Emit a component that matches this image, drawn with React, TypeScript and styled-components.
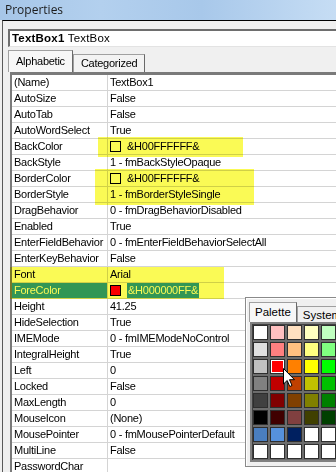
import styled, { createGlobalStyle } from "styled-components";

const GlobalStyle = createGlobalStyle`
  html, body {
    margin: 0;
    padding: 0;
    background: #f0f0f0;
  }
  body {
    font-family: "Liberation Sans", Arial, sans-serif;
    font-size: 11px;
    letter-spacing: -0.25px;
    color: #000;
  }
`;

const Screen = styled.div`
  position: relative;
  width: 336px;
  height: 472px;
  overflow: hidden;
  background: #f0f0f0;
`;

const TitleBar = styled.div`
  height: 20px;
  padding-left: 5px;
  background: linear-gradient(
    to right,
    #a6c6e8 0%,
    #b3d0ee 30%,
    #a8c8ea 60%,
    #c6ddf4 100%
  );
  font-family: "Open Sans", "Noto Sans", sans-serif;
  font-size: 12px;
  letter-spacing: 0;
  line-height: 20px;
  color: #1c1c1c;
`;

const Frame = styled.div`
  margin-left: 2px;
  height: 451px;
  padding: 8px 0 0 5px;
  border-top: 1px solid #000;
  border-left: 1px solid #5a5a5a;
`;

const ObjectBox = styled.div`
  width: 400px;
  height: 15px;
  padding-left: 2px;
  border-top: 2px solid #6e6e6e;
  border-left: 2px solid #6e6e6e;
  border-bottom: 1px solid #e3e3e3;
  background: #fff;
  font-size: 11.5px;
  letter-spacing: 0.2px;
  line-height: 15px;
  white-space: nowrap;

  b {
    font-weight: bold;
  }
`;

const TabStrip = styled.div`
  display: flex;
  align-items: flex-end;
  height: 22px;
  margin-top: 3px;
`;

const Tab = styled.div<{ $active?: boolean }>`
  height: ${(p) => (p.$active ? 21 : 17)}px;
  padding: 0 7px;
  border: 1px solid #a0a0a0;
  border-bottom: none;
  border-right: 1px solid #696969;
  background: ${(p) => (p.$active ? "#f7f7f7" : "#f3f3f3")};
  line-height: ${(p) => (p.$active ? 20 : 17)}px;
  white-space: nowrap;
`;

const Grid = styled.div`
  width: 400px;
  margin-left: 2px;
  border-top: 3px solid #7a7a7a;
  border-left: 2px solid #7a7a7a;
  background: #fff;
  height: 400px;
`;

const Row = styled.div`
  display: grid;
  grid-template-columns: 96px 1fr;
  height: 16px;
  box-sizing: border-box;
  border-bottom: 1px solid #d4d4d4;
  line-height: 15px;
  white-space: nowrap;
`;

const NameCell = styled.div<{ $selected?: boolean }>`
  padding-left: 2px;
  overflow: hidden;
  border-right: 1px solid #d4d4d4;
  background: ${(p) => (p.$selected ? "#3399ff" : "transparent")};
  color: ${(p) => (p.$selected ? "#fff" : "#000")};
`;

const ValueCell = styled.div`
  display: flex;
  align-items: center;
  padding-left: 2px;
`;

const Swatch = styled.span<{ $color: string }>`
  width: 9px;
  height: 9px;
  margin-right: 6px;
  border: 1px solid #000;
  background: ${(p) => p.$color};
`;

const Picked = styled.span`
  padding: 0 1px;
  background: #3399ff;
  color: #fff;
`;

const Marker = styled.div`
  position: absolute;
  background: #fafa55;
  mix-blend-mode: multiply;
  pointer-events: none;
`;

const Popup = styled.div`
  position: absolute;
  left: 245px;
  top: 297px;
  width: 110px;
  height: 164px;
  padding: 4px 0 0 4px;
  border: 1px solid #8a8a8a;
  box-shadow: inset 1px 1px 0 #fff;
  background: #f0f0f0;
`;

const PopupTabs = styled.div`
  display: flex;
  align-items: flex-end;
  height: 20px;
  margin-left: -1px;
`;

const PopupTab = styled.div<{ $active?: boolean }>`
  height: ${(p) => (p.$active ? 19 : 15)}px;
  padding: 0 5px;
  border: 1px solid #a0a0a0;
  border-bottom: none;
  border-right-color: #696969;
  background: ${(p) => (p.$active ? "#f7f7f7" : "#f0f0f0")};
  font-size: 11.5px;
  letter-spacing: 0;
  line-height: ${(p) => (p.$active ? 18 : 16)}px;
  white-space: nowrap;
`;

const SwatchGrid = styled.div`
  display: grid;
  grid-template-columns: repeat(6, 15px);
  grid-auto-rows: 15px;
  gap: 2px;
  padding: 1px;
  border: 2px solid #808080;
  border-right: none;
  box-shadow: inset 1px 1px 0 #404040;
  background: #6c6c6c;
  width: 120px;
`;

const Cell = styled.div<{ $color: string; $picked?: boolean }>`
  box-sizing: border-box;
  border: 1px solid #2e2e2e;
  background: ${(p) => p.$color};
  box-shadow: ${(p) => (p.$picked ? "inset 0 0 0 1px #fff" : "none")};
`;

const Pointer = styled.svg`
  position: absolute;
  left: 283px;
  top: 368px;
`;

type Prop = {
  name: string;
  value: string;
  swatch?: string;
  selected?: boolean;
};

const props: Prop[] = [
  { name: "(Name)", value: "TextBox1" },
  { name: "AutoSize", value: "False" },
  { name: "AutoTab", value: "False" },
  { name: "AutoWordSelect", value: "True" },
  { name: "BackColor", value: "&H00FFFFFF&", swatch: "#fff" },
  { name: "BackStyle", value: "1 - fmBackStyleOpaque" },
  { name: "BorderColor", value: "&H00FFFFFF&", swatch: "#fff" },
  { name: "BorderStyle", value: "1 - fmBorderStyleSingle" },
  { name: "DragBehavior", value: "0 - fmDragBehaviorDisabled" },
  { name: "Enabled", value: "True" },
  { name: "EnterFieldBehavior", value: "0 - fmEnterFieldBehaviorSelectAll" },
  { name: "EnterKeyBehavior", value: "False" },
  { name: "Font", value: "Arial" },
  { name: "ForeColor", value: "&H000000FF&", swatch: "#ff0000", selected: true },
  { name: "Height", value: "41.25" },
  { name: "HideSelection", value: "True" },
  { name: "IMEMode", value: "0 - fmIMEModeNoControl" },
  { name: "IntegralHeight", value: "True" },
  { name: "Left", value: "0" },
  { name: "Locked", value: "False" },
  { name: "MaxLength", value: "0" },
  { name: "MouseIcon", value: "(None)" },
  { name: "MousePointer", value: "0 - fmMousePointerDefault" },
  { name: "MultiLine", value: "False" },
  { name: "PasswordChar", value: "" },
];

const W = "#ffffff";
const palette: string[][] = [
  [W, "#ffc0c0", "#ffe0c0", "#ffffc0", "#c0ffc0", "#c0ffff"],
  ["#e0e0e0", "#ff8080", "#ffc080", "#ffff80", "#80ff80", "#80ffff"],
  ["#c0c0c0", "#ff0000", "#ff8000", "#ffff00", "#00ff00", "#00ffff"],
  ["#808080", "#c00000", "#c04000", "#c0c000", "#00c000", "#00c0c0"],
  ["#404040", "#800000", "#804000", "#808000", "#008000", "#008080"],
  ["#000000", "#400000", "#804040", "#404000", "#004000", "#004040"],
  ["#4a7ebf", "#5691dc", "#002060", W, W, W],
  [W, W, W, W, W, W],
];

const markers = [
  { x: 98, y: 137, w: 145, h: 20 },
  { x: 95, y: 169, w: 159, h: 36 },
  { x: 10, y: 267, w: 214, h: 32 },
];

export default function App() {
  return (
    <Screen>
      <GlobalStyle />
      <TitleBar>Properties</TitleBar>
      <Frame>
        <ObjectBox>
          <b>TextBox1</b> TextBox
        </ObjectBox>
        <TabStrip>
          <Tab $active>Alphabetic</Tab>
          <Tab>Categorized</Tab>
        </TabStrip>
        <Grid>
          {props.map((p) => (
            <Row key={p.name}>
              <NameCell $selected={p.selected}>{p.name}</NameCell>
              <ValueCell>
                {p.swatch && <Swatch $color={p.swatch} />}
                {p.selected ? <Picked>{p.value}</Picked> : p.value}
              </ValueCell>
            </Row>
          ))}
        </Grid>
      </Frame>

      {markers.map((m, i) => (
        <Marker
          key={i}
          style={{ left: m.x, top: m.y, width: m.w, height: m.h }}
        />
      ))}

      <Popup>
        <PopupTabs>
          <PopupTab $active>Palette</PopupTab>
          <PopupTab>System</PopupTab>
        </PopupTabs>
        <SwatchGrid>
          {palette.map((row, r) =>
            row.map((c, i) => (
              <Cell key={`${r}-${i}`} $color={c} $picked={r === 2 && i === 1} />
            ))
          )}
        </SwatchGrid>
      </Popup>

      <Pointer width="13" height="20" viewBox="0 0 13 20">
        <path
          d="M0.5 0.5 L0.5 16 L4.2 12.5 L6.8 18.5 L9 17.5 L6.5 11.7 L11.5 11.7 Z"
          fill="#fff"
          stroke="#000"
          strokeWidth="1"
          strokeLinejoin="miter"
        />
      </Pointer>
    </Screen>
  );
}
